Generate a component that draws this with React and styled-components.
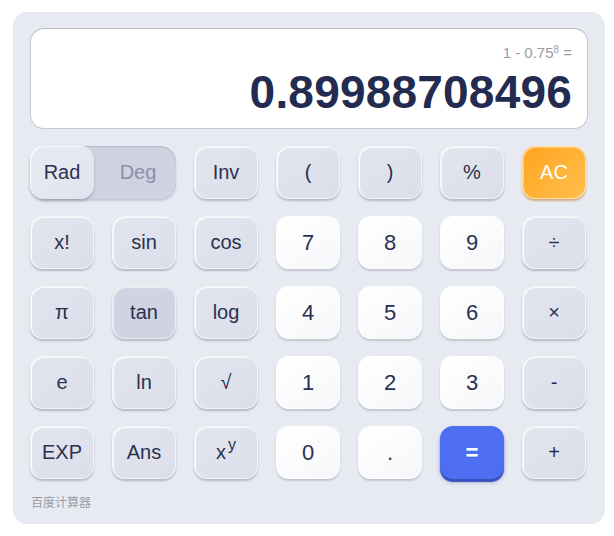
import React from "react";
import styled, { createGlobalStyle, css } from "styled-components";

const Global = createGlobalStyle`
  html, body { margin: 0; padding: 0; background: #ffffff; }
  body { font-family: "Liberation Sans", Arial, sans-serif; }
`;

const Card = styled.div`
  margin: 12px 0 0 13px;
  width: 592px;
  height: 512px;
  box-sizing: border-box;
  padding: 16px 17px 0 17px;
  background: #e8eaf2;
  border-radius: 14px;
  display: flex;
  flex-direction: column;
`;

const Display = styled.div`
  height: 101px;
  box-sizing: border-box;
  background: #ffffff;
  border: 1px solid #c4c7d2;
  border-top-color: #b9bcc8;
  border-radius: 14px;
  padding: 15px 15px 0 0;
  display: flex;
  flex-direction: column;
  align-items: flex-end;
`;

const Expr = styled.div`
  font-size: 15px;
  color: #9a9ca6;
  line-height: 18px;
  sup { font-size: 10px; vertical-align: 5px; line-height: 0; }
`;

const Result = styled.div`
  font-size: 46px;
  font-weight: 700;
  color: #232c50;
  line-height: 52px;
  margin-top: 4px;
  letter-spacing: 0.2px;
`;

const Grid = styled.div`
  margin-top: 17px;
  display: grid;
  grid-template-columns: repeat(7, 64px);
  grid-auto-rows: 53px;
  column-gap: 18px;
  row-gap: 17px;
`;

const variants = {
  fn: css`
    background: linear-gradient(145deg, #e2e4ee, #dcdfea);
    color: #2a3150;
    box-shadow: 0 2px 2px rgba(120, 125, 150, 0.45), inset 1px 1px 1px rgba(255, 255, 255, 0.9);
    font-size: 20px;
  `,
  active: css`
    background: #d0d3e1;
    color: #2a3150;
    box-shadow: 0 2px 2px rgba(120, 125, 150, 0.45), inset 1px 1px 1px rgba(255, 255, 255, 0.7);
    font-size: 20px;
  `,
  num: css`
    background: linear-gradient(145deg, #ffffff, #f6f7fa);
    color: #2a3150;
    box-shadow: 0 2px 2px rgba(120, 125, 150, 0.35), inset 1px 1px 1px rgba(255, 255, 255, 1);
    font-size: 22px;
  `,
  ac: css`
    background: linear-gradient(135deg, #ffa41f, #ffbf4d);
    color: #ffffff;
    box-shadow: 0 2px 2px rgba(190, 120, 30, 0.55), inset 1px 1px 1px rgba(255, 220, 150, 0.6);
    font-size: 20px;
  `,
  eq: css`
    background: #4d6ef0;
    color: #ffffff;
    box-shadow: 0 3px 1px #3650c0, 0 3px 4px rgba(40, 60, 160, 0.35);
    font-size: 22px;
    font-weight: 700;
  `,
};

const Key = styled.div`
  border-radius: 13px;
  display: flex;
  align-items: center;
  justify-content: center;
  box-sizing: border-box;
  border: 1px solid rgba(255, 255, 255, 0.6);
  ${(p) => variants[p.$v || "fn"]}
  ${(p) => p.$v === "eq" && css`border: none;`}
`;

const Power = styled.span`
  sup { font-size: 16px; vertical-align: 9px; line-height: 0; margin-left: 2px; }
`;

const Toggle = styled.div`
  grid-column: span 2;
  border-radius: 16px;
  background: #cfd2e1;
  box-shadow: 0 2px 2px rgba(120, 125, 150, 0.3), inset 0 1px 1px rgba(150, 155, 175, 0.5);
  display: grid;
  grid-template-columns: 64px 1fr;
  font-size: 20px;
`;

const Seg = styled.div`
  display: flex;
  align-items: center;
  justify-content: center;
  border-radius: 14px;
  ${(p) =>
    p.$on
      ? css`
          background: linear-gradient(145deg, #e8eaf3, #e1e3ee);
          color: #2a3150;
          box-shadow: 0 2px 3px rgba(110, 115, 140, 0.45), inset 1px 1px 1px rgba(255, 255, 255, 0.9);
        `
      : css`
          color: #8c90a8;
          padding-left: 6px;
        `}
`;

const Footer = styled.div`
  margin-top: 14px;
  font-family: "Noto Sans CJK SC", sans-serif;
  font-size: 12px;
  color: #9a9ca8;
  padding-left: 1px;
`;

const rows = [
  [["Inv"], ["("], [")"], ["%"], ["AC", "ac"]],
  [["x!"], ["sin"], ["cos"], ["7", "num"], ["8", "num"], ["9", "num"], ["÷"]],
  [["π"], ["tan", "active"], ["log"], ["4", "num"], ["5", "num"], ["6", "num"], ["×"]],
  [["e"], ["ln"], ["√"], ["1", "num"], ["2", "num"], ["3", "num"], ["-"]],
  [["EXP"], ["Ans"], ["xy"], ["0", "num"], [".", "num"], ["=", "eq"], ["+"]],
];

export default function App() {
  return (
    <>
      <Global />
      <Card>
        <Display>
          <Expr>
            1 - 0.75<sup>8</sup> =
          </Expr>
          <Result>0.89988708496</Result>
        </Display>
        <Grid>
          <Toggle>
            <Seg $on>Rad</Seg>
            <Seg>Deg</Seg>
          </Toggle>
          {rows.flat().map(([label, v], i) => (
            <Key key={i} $v={v}>
              {label === "xy" ? (
                <Power>
                  x<sup>y</sup>
                </Power>
              ) : (
                label
              )}
            </Key>
          ))}
        </Grid>
        <Footer>百度计算器</Footer>
      </Card>
    </>
  );
}
